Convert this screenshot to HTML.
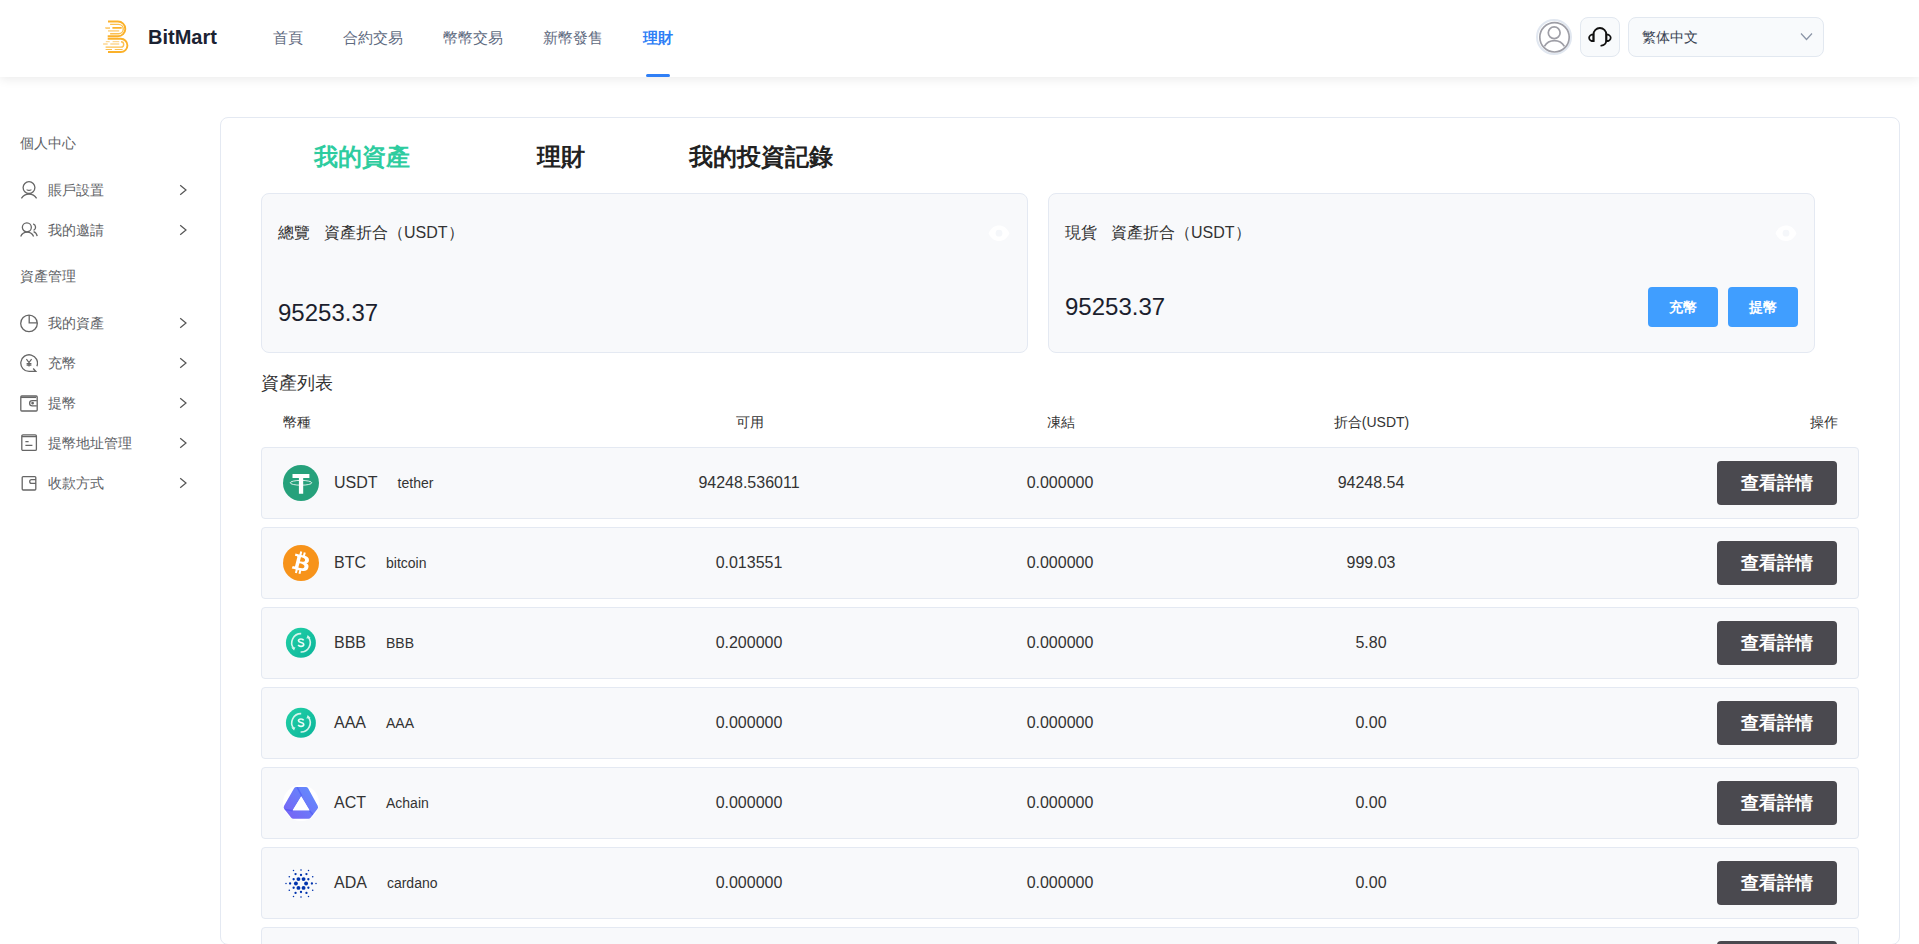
<!DOCTYPE html>
<html><head><meta charset="utf-8">
<style>
*{box-sizing:border-box;margin:0;padding:0}
html,body{width:1919px;height:944px;overflow:hidden;background:#fff;font-family:"Liberation Sans",sans-serif;color:#333}
.abs{position:absolute}
#hdr{position:absolute;left:0;top:0;width:1919px;height:77px;background:#fff;box-shadow:0 2px 10px rgba(0,0,0,0.085);z-index:2}
.nav{position:absolute;top:26px;font-size:15px;line-height:24px;color:#5f6b81;white-space:nowrap}
.nav.act{color:#2f7ff6;font-weight:bold}
.side-h{position:absolute;left:20px;font-size:14px;line-height:20px;color:#606266;white-space:nowrap}
.side-i{position:absolute;left:20px;width:170px;height:20px}
.side-i svg.ic{position:absolute;left:0;top:1px}
.side-i span{position:absolute;left:28px;top:0;font-size:14px;line-height:20px;color:#606266;white-space:nowrap}
.side-i svg.chev{position:absolute;left:159px;top:4px}
#card{position:absolute;left:220px;top:117px;width:1680px;height:828px;border:1px solid #e4e9f2;border-radius:8px;background:#fff}
.tab{position:absolute;top:141px;width:200px;text-align:center;font-size:24px;line-height:32px;font-weight:bold;color:#222}
.sum{position:absolute;top:193px;width:767px;height:160px;background:#f8f9fb;border:1px solid #e4e9f2;border-radius:8px}
.sum .t{position:absolute;left:16px;top:29px;font-size:16px;line-height:20px;color:#333;white-space:nowrap}
.sum .n{position:absolute;left:16px;font-size:24px;line-height:28px;color:#1c1f2e}
.sum .eye{position:absolute;right:17px;top:31px}
.bbtn{position:absolute;top:93px;width:70px;height:40px;border-radius:4px;background:#409eff;color:#fff;font-size:14px;font-weight:bold;line-height:40px;text-align:center}
.colh{position:absolute;top:412px;font-size:14px;line-height:20px;color:#333;white-space:nowrap}
.row{position:absolute;left:261px;width:1598px;height:72px;background:#f8f9fb;border:1px solid #e4e9f2;border-radius:4px}
.row .ico{position:absolute;left:21px;top:17px;width:36px;height:36px}
.row .sym{position:absolute;left:72px;top:24px;font-size:16px;line-height:22px;color:#333;white-space:nowrap}
.row .sym i{font-style:normal;font-size:14px;margin-left:20px}
.row .v{position:absolute;top:24px;width:311px;text-align:center;font-size:16px;line-height:22px;color:#333}
.row .btn{position:absolute;left:1455px;top:13px;width:120px;height:44px;border-radius:4px;background:#4a494f;color:#fff;font-size:18px;font-weight:bold;line-height:44px;text-align:center}
</style></head><body>
<svg width="0" height="0" style="position:absolute">
<defs>
<linearGradient id="gsc" x1="0" y1="0" x2="1" y2="1"><stop offset="0" stop-color="#22d0a6"/><stop offset="1" stop-color="#0cb59b"/></linearGradient>
<linearGradient id="gact" x1="1" y1="0" x2="0" y2="1"><stop offset="0" stop-color="#5f93ff"/><stop offset="1" stop-color="#7a5ff3"/></linearGradient>
<symbol id="i-usdt" viewBox="0 0 36 36"><circle cx="18" cy="18" r="18" fill="#26a17b"/><path fill="#fff" d="M9.5 8.9h16.9v4.1h-6.2v15.7h-4.3V13H9.5z"/><ellipse cx="18" cy="17.8" rx="10.8" ry="2.4" fill="none" stroke="#fff" stroke-opacity=".9" stroke-width=".9"/></symbol>
<symbol id="i-btc" viewBox="0 0 64 64"><circle cx="32" cy="32" r="32" fill="#f7931a"/><path fill="#fff" d="M46.1 27.4c.64-4.26-2.6-6.55-7.04-8.07l1.44-5.77-3.51-.88-1.4 5.62c-.92-.23-1.87-.45-2.81-.66l1.41-5.65-3.51-.88-1.44 5.77c-.76-.17-1.51-.35-2.24-.53l-4.84-1.21-.93 3.75s2.6.6 2.55.63c1.42.36 1.68 1.3 1.64 2.04l-1.64 6.57c.1.02.22.06.37.12l-.37-.09-2.3 9.2c-.17.43-.61 1.08-1.61.83.04.05-2.55-.64-2.55-.64l-1.74 4.02 4.57 1.14c.85.21 1.68.44 2.5.65l-1.45 5.83 3.51.88 1.44-5.77c.96.26 1.89.5 2.8.73l-1.43 5.74 3.51.88 1.45-5.82c5.99 1.13 10.49.68 12.38-4.74 1.53-4.36-.08-6.88-3.23-8.52 2.29-.53 4.02-2.04 4.48-5.15zM38.08 38.7c-1.08 4.36-8.43 2-10.8 1.41l1.93-7.73c2.38.6 10.01 1.77 8.88 6.32zm1.09-11.31c-.99 3.97-7.1 1.95-9.08 1.46l1.75-7.01c1.98.49 8.36 1.41 7.33 5.55z"/></symbol>
<symbol id="i-sc" viewBox="0 0 36 36"><circle cx="17.9" cy="17.8" r="15" fill="url(#gsc)"/><g transform="translate(0,-0.9)"><g fill="none" stroke="#d4f5ec" stroke-width="1.6"><path d="M18.2 9.5A9.2 9.2 0 0 0 10.6 24.2"/><path d="M17.6 27.9A9.2 9.2 0 0 0 25.4 13.2"/></g><path fill="#d4f5ec" d="M8.2 23.4l4.2-.3-1.3 3.3z M27.6 14l-4.2.3 1.3-3.3z"/><path fill="none" stroke="#eafbf6" stroke-width="1.7" d="M20.6 16.2c-.4-.9-1.3-1.3-2.6-1.3-1.5 0-2.5.7-2.5 1.7 0 2.4 5.2 1.2 5.2 3.8 0 1-1 1.8-2.7 1.8-1.3 0-2.3-.5-2.8-1.4"/></g></symbol>
<symbol id="i-act" viewBox="0 0 36 36"><clipPath id="cact"><path d="M13.3 2.9h9.6q1.4 0 2.2 1.3l9.6 17.5q.9 1.7-.3 3.2l-6.6 8.6q-.9 1.2-2.4 1.2H10.4q-1.5 0-2.4-1.2l-6.7-8.5q-1.2-1.6-.2-3.3l10-17.5q.8-1.3 2.2-1.3z"/></clipPath><circle cx="18" cy="18" r="18" fill="#fff"/><g transform="translate(0,-0.9)"><g clip-path="url(#cact)"><path fill="url(#gact)" fill-rule="evenodd" d="M0 0h36v36H0zM18.2 12.3l-8.4 13.9h16.6z"/><path fill="none" stroke="#3f4cf5" stroke-opacity=".45" stroke-width="1.4" d="M14.2 3.2l4.6 8.6 M26.6 26.6l5 6 M9.6 26.6L1 25.2"/></g><path fill="#fff" d="M18.2 12.3l-8.4 13.9h16.6z"/></g></symbol>
<symbol id="i-ada" viewBox="0 0 36 36"><g fill="#0033ad"><circle cx="23.10" cy="18.50" r="1.95"/><circle cx="20.55" cy="22.92" r="1.95"/><circle cx="15.45" cy="22.92" r="1.95"/><circle cx="12.90" cy="18.50" r="1.95"/><circle cx="15.45" cy="14.08" r="1.95"/><circle cx="20.55" cy="14.08" r="1.95"/><circle cx="25.36" cy="22.75" r="1.15"/><circle cx="18.00" cy="27.00" r="1.15"/><circle cx="10.64" cy="22.75" r="1.15"/><circle cx="10.64" cy="14.25" r="1.15"/><circle cx="18.00" cy="10.00" r="1.15"/><circle cx="25.36" cy="14.25" r="1.15"/><circle cx="28.90" cy="18.50" r="1.15"/><circle cx="23.45" cy="27.94" r="1.15"/><circle cx="12.55" cy="27.94" r="1.15"/><circle cx="7.10" cy="18.50" r="1.15"/><circle cx="12.55" cy="9.06" r="1.15"/><circle cx="23.45" cy="9.06" r="1.15"/><circle cx="29.69" cy="25.25" r="0.8"/><circle cx="18.00" cy="32.00" r="0.8"/><circle cx="6.31" cy="25.25" r="0.8"/><circle cx="6.31" cy="11.75" r="0.8"/><circle cx="18.00" cy="5.00" r="0.8"/><circle cx="29.69" cy="11.75" r="0.8"/><circle cx="33.00" cy="18.50" r="0.75"/><circle cx="25.50" cy="31.49" r="0.75"/><circle cx="10.50" cy="31.49" r="0.75"/><circle cx="3.00" cy="18.50" r="0.75"/><circle cx="10.50" cy="5.51" r="0.75"/><circle cx="25.50" cy="5.51" r="0.75"/></g></symbol>
<symbol id="chev" viewBox="0 0 8 12"><path d="M1.2 1.2l5.8 4.8-5.8 4.8" fill="none" stroke="#555" stroke-width="1.2"/></symbol>
</defs></svg>

<div id="hdr">
  <svg class="abs" style="left:102px;top:20px" width="28" height="34" viewBox="0 0 28 34">
    <g fill="none">
      <path d="M6 1.5H15.9A7.4 7.4 0 0 1 15.9 16.3H5.7" stroke="#fbb12a" stroke-width="1.9"/>
      <path d="M8.1 4.4H16.6A4.65 4.65 0 0 1 16.6 13.7H8.1" stroke="#fcc04f" stroke-width="1.4"/>
      <path d="M10.4 7.8H19.7M3.6 7.8H7.9" stroke="#fbb12a" stroke-width="1.7"/>
      <path d="M3.6 7.8H7.9M6 10.9H17.2" stroke="#fdd792" stroke-width="1.6"/>
      <path d="M5.7 18.8H18.8A6.6 6.6 0 0 1 18.8 32H6" stroke="#fbb12a" stroke-width="1.9"/>
      <path d="M3.6 27.1H19A2.7 2.7 0 0 0 19 21.7" stroke="#fcc04f" stroke-width="1.4"/>
      <path d="M3.8 21.7H7.7M10.6 21.7H17.2" stroke="#fdd792" stroke-width="1.2"/>
      <path d="M1.1 24H5.7M8.3 24H17.2" stroke="#fdd792" stroke-width="1.6"/>
      <path d="M3.6 29.5H10M12.7 29.5H20.6" stroke="#fcc04f" stroke-width="1.2"/>
    </g>
  </svg>
  <div class="abs" style="left:148px;top:25px;font-size:20px;line-height:24px;font-weight:bold;color:#1b2232">BitMart</div>
  <div class="nav" style="left:273px">首頁</div>
  <div class="nav" style="left:343px">合約交易</div>
  <div class="nav" style="left:443px">幣幣交易</div>
  <div class="nav" style="left:543px">新幣發售</div>
  <div class="nav act" style="left:643px">理財</div>
  <div class="abs" style="left:646px;top:74px;width:24px;height:3px;border-radius:2px;background:#2f7ff6"></div>

  <svg class="abs" style="left:1536px;top:19px" width="36" height="36" viewBox="0 0 36 36"><circle cx="18" cy="18" r="17" fill="#fff" stroke="#e1e7f0" stroke-width="2"/><g fill="none" stroke="#9e9ea6" stroke-width="1.7"><circle cx="18.5" cy="18.3" r="14.7"/><circle cx="18.2" cy="13.8" r="5.9"/><path d="M8.4 27.4A11.6 11.6 0 0 1 28.4 27.4"/></g></svg>
  <div class="abs" style="left:1580px;top:17px;width:40px;height:40px;border-radius:8px;border:1px solid #e2e8f0;background:#f8fafc"><svg class="abs" style="left:-1px;top:-1px" width="40" height="40" viewBox="0 0 40 40"><g fill="none" stroke="#111" stroke-width="1.8" stroke-linecap="round"><path d="M13.5 24.2V17.4A6.4 6.4 0 0 1 26.3 17.4V23.6A5.2 5.2 0 0 1 21.3 28.6"/><path d="M13.5 17.4A4.4 3.4 0 0 0 13.5 24.2Z"/><path d="M26.3 17.4A4.4 3.4 0 0 1 26.3 24.2Z"/></g></svg></div>
  <div class="abs" style="left:1628px;top:17px;width:196px;height:40px;border-radius:8px;border:1px solid #e2e8f0;background:#f8fafc">
    <div class="abs" style="left:13px;top:9px;font-size:14px;line-height:20px;color:#374151">繁体中文</div>
    <svg class="abs" style="left:171px;top:14px" width="13" height="9" viewBox="0 0 13 9"><path d="M1 1.5l5.5 6 5.5-6" fill="none" stroke="#8a94a6" stroke-width="1.2"/></svg>
  </div>
</div>

<!-- sidebar -->
<div class="side-h" style="top:133px">個人中心</div>
<div class="side-i" style="top:180px"><svg class="ic" width="18" height="20" viewBox="0 0 18 20"><g fill="none" stroke="#666" stroke-width="1.3"><circle cx="9" cy="6.6" r="5.9"/><path d="M6.6 8.6q2.4 1.6 4.8 0" stroke-width="1.1"/><path d="M1.4 17.3A9.1 9.1 0 0 1 16.6 17.3"/></g></svg><span>賬戶設置</span><svg class="chev" width="8" height="12" viewBox="0 0 8 12"><use href="#chev"/></svg></div>
<div class="side-i" style="top:220px"><svg class="ic" width="18" height="20" viewBox="0 0 18 20"><g fill="none" stroke="#666" stroke-width="1.3"><circle cx="6.85" cy="6.3" r="4.5"/><path d="M0.7 15.4A7.05 7.05 0 0 1 13.6 15.4"/><path d="M13.2 2.8A3.6 3.6 0 0 1 13.6 9.4"/><path d="M13.6 10.6A6 6 0 0 1 17.2 15.2"/></g></svg><span>我的邀請</span><svg class="chev" width="8" height="12" viewBox="0 0 8 12"><use href="#chev"/></svg></div>
<div class="side-h" style="top:266px">資產管理</div>
<div class="side-i" style="top:313px"><svg class="ic" width="18" height="20" viewBox="0 0 18 20"><g fill="none" stroke="#666" stroke-width="1.3"><circle cx="9" cy="9.4" r="8.3"/><path d="M9.2 1.1V8.9H17.3"/></g></svg><span>我的資產</span><svg class="chev" width="8" height="12" viewBox="0 0 8 12"><use href="#chev"/></svg></div>
<div class="side-i" style="top:353px"><svg class="ic" width="18" height="20" viewBox="0 0 18 20"><g fill="none" stroke="#666" stroke-width="1.3"><path d="M16.9 12.2A8.35 8.35 0 1 0 9.05 17.45H15.8L13.2 14.5"/><path d="M6.4 5.2L9 8.6L11.6 5.2M9 8.6V12.6M6.6 9.6H11.4M6.6 11.2H11.4" stroke-width="1.2"/></g></svg><span>充幣</span><svg class="chev" width="8" height="12" viewBox="0 0 8 12"><use href="#chev"/></svg></div>
<div class="side-i" style="top:393px"><svg class="ic" width="18" height="20" viewBox="0 0 18 20"><g fill="none" stroke="#666" stroke-width="1.3"><rect x="0.8" y="2" width="16.4" height="15" rx="1"/><path d="M1 3.4H16.2"/><path d="M16.8 6.6H12.2A2.6 2.6 0 0 0 12.2 11.8H16.8"/><circle cx="12.6" cy="9.2" r="0.7" fill="#666"/></g></svg><span>提幣</span><svg class="chev" width="8" height="12" viewBox="0 0 8 12"><use href="#chev"/></svg></div>
<div class="side-i" style="top:433px"><svg class="ic" width="18" height="20" viewBox="0 0 18 20"><g fill="none" stroke="#666" stroke-width="1.3"><rect x="1.8" y="0.8" width="14.6" height="15.6" rx="1.2"/><path d="M2 2.6H16.2"/><path d="M5.4 7.6H8.6M5.4 11.4H12.4"/></g></svg><span>提幣地址管理</span><svg class="chev" width="8" height="12" viewBox="0 0 8 12"><use href="#chev"/></svg></div>
<div class="side-i" style="top:473px"><svg class="ic" width="18" height="20" viewBox="0 0 18 20"><g fill="none" stroke="#666" stroke-width="1.3"><rect x="2.2" y="2.6" width="13.6" height="13.4" rx="1"/><path d="M16 5.6H11.6A1.9 1.9 0 0 0 11.6 9.4H16"/></g></svg><span>收款方式</span><svg class="chev" width="8" height="12" viewBox="0 0 8 12"><use href="#chev"/></svg></div>

<div id="card"></div>
<div class="tab" style="left:262px;color:#2ecc9f">我的資產</div>
<div class="tab" style="left:461px">理財</div>
<div class="tab" style="left:661px">我的投資記錄</div>

<div class="sum" style="left:261px">
  <svg class="eye" width="22" height="17" viewBox="0 0 22 17"><path d="M0.5 8.2C3 2.8 6.8 0.4 11 0.4S19 2.8 21.5 8.2C19 13.6 15.2 16 11 16S3 13.6 0.5 8.2Z" fill="#fff"/><circle cx="11" cy="8.2" r="3.4" fill="#f5f7fa"/></svg><div class="t">總覽<b style="font-weight:normal;margin-left:14px">資產折合</b>（USDT）</div>
  <div class="n" style="top:105px">95253.37</div>
</div>
<div class="sum" style="left:1048px">
  <svg class="eye" width="22" height="17" viewBox="0 0 22 17"><path d="M0.5 8.2C3 2.8 6.8 0.4 11 0.4S19 2.8 21.5 8.2C19 13.6 15.2 16 11 16S3 13.6 0.5 8.2Z" fill="#fff"/><circle cx="11" cy="8.2" r="3.4" fill="#f5f7fa"/></svg><div class="t">現貨<b style="font-weight:normal;margin-left:14px">資產折合</b>（USDT）</div>
  <div class="n" style="top:99px">95253.37</div>
  <div class="bbtn" style="left:599px">充幣</div>
  <div class="bbtn" style="left:679px">提幣</div>
</div>

<div class="abs" style="left:261px;top:372px;font-size:18px;line-height:22px;color:#333">資產列表</div>
<div class="colh" style="left:283px">幣種</div>
<div class="colh" style="left:594px;width:311px;text-align:center">可用</div>
<div class="colh" style="left:905px;width:311px;text-align:center">凍結</div>
<div class="colh" style="left:1216px;width:311px;text-align:center">折合(USDT)</div>
<div class="colh" style="left:1527px;width:311px;text-align:right">操作</div>

<div class="row" style="top:447px">
  <svg class="ico" viewBox="0 0 36 36"><use href="#i-usdt"/></svg>
  <div class="sym">USDT<i>tether</i></div>
  <div class="v" style="left:331.5px">94248.536011</div>
  <div class="v" style="left:642.5px">0.000000</div>
  <div class="v" style="left:953.5px">94248.54</div>
  <div class="btn">查看詳情</div>
</div>
<div class="row" style="top:527px">
  <svg class="ico" viewBox="0 0 36 36"><use href="#i-btc" width="36" height="36"/></svg>
  <div class="sym">BTC<i>bitcoin</i></div>
  <div class="v" style="left:331.5px">0.013551</div>
  <div class="v" style="left:642.5px">0.000000</div>
  <div class="v" style="left:953.5px">999.03</div>
  <div class="btn">查看詳情</div>
</div>
<div class="row" style="top:607px">
  <svg class="ico" viewBox="0 0 36 36"><use href="#i-sc"/></svg>
  <div class="sym">BBB<i>BBB</i></div>
  <div class="v" style="left:331.5px">0.200000</div>
  <div class="v" style="left:642.5px">0.000000</div>
  <div class="v" style="left:953.5px">5.80</div>
  <div class="btn">查看詳情</div>
</div>
<div class="row" style="top:687px">
  <svg class="ico" viewBox="0 0 36 36"><use href="#i-sc"/></svg>
  <div class="sym">AAA<i>AAA</i></div>
  <div class="v" style="left:331.5px">0.000000</div>
  <div class="v" style="left:642.5px">0.000000</div>
  <div class="v" style="left:953.5px">0.00</div>
  <div class="btn">查看詳情</div>
</div>
<div class="row" style="top:767px">
  <svg class="ico" viewBox="0 0 36 36"><use href="#i-act"/></svg>
  <div class="sym">ACT<i>Achain</i></div>
  <div class="v" style="left:331.5px">0.000000</div>
  <div class="v" style="left:642.5px">0.000000</div>
  <div class="v" style="left:953.5px">0.00</div>
  <div class="btn">查看詳情</div>
</div>
<div class="row" style="top:847px">
  <svg class="ico" viewBox="0 0 36 36"><use href="#i-ada"/></svg>
  <div class="sym">ADA<i>cardano</i></div>
  <div class="v" style="left:331.5px">0.000000</div>
  <div class="v" style="left:642.5px">0.000000</div>
  <div class="v" style="left:953.5px">0.00</div>
  <div class="btn">查看詳情</div>
</div>
<div class="row" style="top:927px">
  <div class="ico"></div>
  <div class="sym"><i></i></div>
  <div class="v" style="left:331.5px"></div>
  <div class="v" style="left:642.5px"></div>
  <div class="v" style="left:953.5px"></div>
  <div class="btn">查看詳情</div>
</div>
</body></html>
